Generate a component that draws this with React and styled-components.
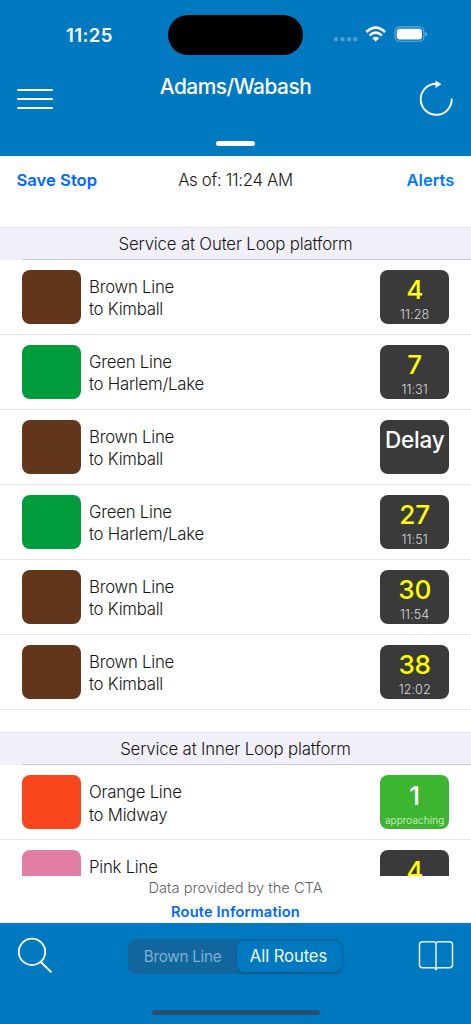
import styled, { createGlobalStyle } from 'styled-components';

const blue = '#0079c1';

const GlobalStyle = createGlobalStyle`
   * {
      box-sizing: border-box;
   }
   body {
      margin: 0;
      background: #fff;
      font-family: Inter, "Liberation Sans", sans-serif;
      font-feature-settings: "calt" 0;
   }
   button {
      border: none;
      background: none;
      padding: 0;
      font-family: inherit;
   }
`;

const Screen = styled.div`
   display: flex;
   flex-direction: column;
   width: 471px;
   height: 1024px;
   overflow: hidden;
   background: #fff;
   color: #161616;
`;

const Header = styled.header`
   flex: none;
   height: 156.4px;
   background: ${blue};
   color: #fff;
`;

const StatusBar = styled.div`
   display: grid;
   grid-template-columns: 168px 135px 1fr;
   height: 55px;
   padding-top: 15px;
`;

const Clock = styled.span`
   padding-left: 66px;
   font-size: 18.6px;
   line-height: 40px;
   font-weight: 600;
   letter-spacing: .35px;
`;

const Island = styled.div`
   height: 39.5px;
   border-radius: 20px;
   background: #000;
`;

const StatusIcons = styled.svg`
   width: 168px;
   height: 40px;
`;

const TitleBar = styled.div`
   display: grid;
   grid-template-columns: 70px 1fr 70px;
   height: 85.5px;
`;

const MenuButton = styled.button`
   display: flex;
   flex-direction: column;
   gap: 7.3px;
   padding: 33.5px 0 0 17px;
`;

const MenuLine = styled.span`
   width: 36px;
   height: 2px;
   border-radius: 1px;
   background: #fff;
`;

const Title = styled.h1`
   margin: 19px 0 0;
   text-align: center;
   font-size: 20.9px;
   line-height: 26px;
   font-weight: 460;
   letter-spacing: -.5px;
`;

const RefreshIcon = styled.svg`
   width: 36px;
   height: 38px;
   margin: 24px 0 0 17px;
`;

const Grabber = styled.div`
   width: 39px;
   height: 5.6px;
   margin: 0 auto;
   border-radius: 3px;
   background: #fff;
`;

const Toolbar = styled.div`
   flex: none;
   display: grid;
   grid-template-columns: 1fr auto 1fr;
   height: 70.6px;
   padding: 13px 16.5px 0;
`;

const AsOf = styled.span`
   font-size: 16.8px;
   line-height: 22px;
   font-weight: 300;
   letter-spacing: -.32px;
`;

const Link = styled.button`
   align-self: start;
   text-align: ${p => (p.$right ? 'right' : 'left')};
   color: ${p => (p.$right ? '#007aff' : '#0066ff')};
   font-size: 16.6px;
   line-height: 22px;
   font-weight: 600;
   letter-spacing: .02px;
`;

const List = styled.main`
   flex: none;
   height: 649px;
   overflow: hidden;
`;

const Section = styled.section`
   margin-bottom: 22.8px;
`;

const SectionTitle = styled.h2`
   height: 32.6px;
   margin: 0;
   background: linear-gradient(#cbcacf, #cbcacf) 22px 100% / 100% 1px no-repeat #f1f0f9;
   border-top: 1px solid #e3e3e6;
   text-align: center;
   font-size: 16.8px;
   line-height: 32px;
   font-weight: 300;
   letter-spacing: -.16px;
`;

const Row = styled.div`
   display: grid;
   grid-template-columns: 59px 1fr 69.5px;
   column-gap: 8.2px;
   height: 75px;
   padding: 10.4px 21.6px 0 21.8px;
   border-bottom: 1px solid #e5e5e6;
`;

const Swatch = styled.div`
   height: 54px;
   border-radius: 8px;
   background: ${p => p.$color};
`;

const RouteName = styled.div`
   padding-top: 6px;
   font-size: 16.8px;
   line-height: 22.5px;
   font-weight: 300;
   letter-spacing: -.25px;
   white-space: pre-line;
`;

const Arrival = styled.div`
   display: flex;
   flex-direction: column;
   align-items: center;
   height: 54px;
   border-radius: 8px;
   background: ${p => (p.$near ? '#3cb531' : '#3a3a3a')};
   color: #fff;
`;

const Minutes = styled.span`
   margin-top: 5.3px;
   color: ${p => (p.$white ? '#fff' : '#ff0')};
   font-size: ${p => (p.$word ? '22.5px' : '26.2px')};
   line-height: 30px;
   font-weight: 450;
   letter-spacing: ${p => (p.$word ? '-.2px' : '-.2px')};
`;

const Detail = styled.span`
   color: ${p => (p.$small ? '#e1f4df' : '#dcdcdc')};
   font-size: ${p => (p.$small ? '10px' : '12.6px')};
   line-height: ${p => (p.$small ? '18px' : '19.4px')};
   font-weight: 300;
   letter-spacing: ${p => (p.$small ? '.1px' : '.05px')};
`;

const Credits = styled.div`
   flex: none;
   display: flex;
   flex-direction: column;
   align-items: center;
   height: 47px;
`;

const Provider = styled.span`
   color: #626262;
   font-size: 14.7px;
   line-height: 25px;
   font-weight: 300;
   letter-spacing: -.03px;
`;

const RouteLink = styled(Link)`
   align-self: center;
   font-size: 14.6px;
   line-height: 23px;
   letter-spacing: .17px;
`;

const BottomBar = styled.footer`
   flex: 1;
   display: grid;
   grid-template-columns: 128px 215px 1fr;
   grid-template-rows: 87px 6px;
   background: ${blue};
`;

const BottomIcon = styled.svg`
   width: 38px;
   height: 38px;
   margin: ${p => p.$margin};
`;

const Segments = styled.div`
   display: grid;
   grid-template-columns: 107px 1fr;
   align-items: center;
   height: 35px;
   margin-top: 16px;
   padding: 1.5px;
   border-radius: 9px;
   background: #10669d;
`;

const Segment = styled.button`
   height: ${p => (p.$active ? '31px' : '32px')};
   padding-right: 1px;
   border-radius: 8px;
   background: ${p => (p.$active ? blue : 'transparent')};
   box-shadow: ${p => (p.$active ? '0 2px 4px rgba(0, 0, 0, .12)' : 'none')};
   color: ${p => (p.$active ? '#f2f9fd' : '#80b2d1')};
   font-size: ${p => (p.$active ? '16.6px' : '15.2px')};
   font-weight: 400;
   letter-spacing: ${p => (p.$active ? '-.08px' : '-.25px')};
`;

const HomeIndicator = styled.div`
   grid-column: 1 / -1;
   justify-self: center;
   width: 168px;
   height: 5.4px;
   border-radius: 3px;
   background: #26506d;
`;

const brown = '#61361a';
const green = '#009b3a';

const outer = [
   { name: 'Brown Line', to: 'Kimball', color: brown, minutes: '4', detail: '11:28' },
   { name: 'Green Line', to: 'Harlem/Lake', color: green, minutes: '7', detail: '11:31' },
   { name: 'Brown Line', to: 'Kimball', color: brown, minutes: 'Delay', delayed: true },
   { name: 'Green Line', to: 'Harlem/Lake', color: green, minutes: '27', detail: '11:51' },
   { name: 'Brown Line', to: 'Kimball', color: brown, minutes: '30', detail: '11:54' },
   { name: 'Brown Line', to: 'Kimball', color: brown, minutes: '38', detail: '12:02' },
];

const inner = [
   { name: 'Orange Line', to: 'Midway', color: '#f9461c', minutes: '1', detail: 'approaching', near: true },
   { name: 'Pink Line', color: '#e27ea6', minutes: '4' },
];

const Train = ({ name, to, color, minutes, detail, delayed, near }) => (
   <Row>
      <Swatch $color={color} />
      <RouteName>{name}{to && `\nto ${to}`}</RouteName>
      <Arrival $near={near}>
         <Minutes $word={delayed} $white={delayed || near}>{minutes}</Minutes>
         {detail && <Detail $small={near}>{detail}</Detail>}
      </Arrival>
   </Row>
)

const Status = () => (
   <StatusIcons viewBox="0 0 168 40">
      <g fill="#fff" opacity=".3">
         <rect x="31" y="22.2" width="4" height="4" rx="1.3" />
         <rect x="37.5" y="22.2" width="4" height="4" rx="1.3" />
         <rect x="44" y="22.2" width="4" height="4" rx="1.3" />
         <rect x="50.3" y="22.2" width="4" height="4" rx="1.3" />
      </g>
      <g fill="none" stroke="#fff" strokeWidth="2.5">
         <path d="M63.3 17Q72.7 8.2 82.1 17" />
         <path d="M66.6 20.5Q72.7 14.7 78.8 20.5" />
      </g>
      <path d="M69.3 23.2Q72.7 20.3 76.1 23.2L72.7 26.6Z" fill="#fff" />
      <rect x="91.9" y="11.9" width="29" height="14.4" rx="4.6" fill="none" stroke="#fff" strokeWidth="1.1" opacity=".4" />
      <rect x="93.7" y="13.8" width="25.3" height="10.6" rx="3" fill="#fff" />
      <path d="M122.4 17Q124.2 17.3 124.2 19.1Q124.2 20.9 122.4 21.2Z" fill="#fff" opacity=".45" />
   </StatusIcons>
)

export default function App() {
   return (
      <Screen>
         <GlobalStyle />
         <Header>
            <StatusBar>
               <Clock>11:25</Clock>
               <Island />
               <Status />
            </StatusBar>
            <TitleBar>
               <MenuButton>
                  <MenuLine />
                  <MenuLine />
                  <MenuLine />
               </MenuButton>
               <Title>Adams/Wabash</Title>
               <RefreshIcon viewBox="418 79 36 38">
                  <path d="M436.2 83.8A15.5 15.5 0 1 0 451.7 98.5" fill="none" stroke="#fff" strokeWidth="1.9" />
                  <path d="M435.5 80.6L441.5 84.2L435.5 88Z" fill="#fff" />
               </RefreshIcon>
            </TitleBar>
            <Grabber />
         </Header>
         <Toolbar>
            <Link>Save Stop</Link>
            <AsOf>As of: 11:24 AM</AsOf>
            <Link $right>Alerts</Link>
         </Toolbar>
         <List>
            <Section>
               <SectionTitle>Service at Outer Loop platform</SectionTitle>
               {outer.map((train, i) => <Train key={i} {...train} />)}
            </Section>
            <Section>
               <SectionTitle>Service at Inner Loop platform</SectionTitle>
               {inner.map((train, i) => <Train key={i} {...train} />)}
            </Section>
         </List>
         <Credits>
            <Provider>Data provided by the CTA</Provider>
            <RouteLink>Route Information</RouteLink>
         </Credits>
         <BottomBar>
            <BottomIcon viewBox="16 936 38 38" $margin="13px 0 0 16px" fill="none" stroke="#fff">
               <circle cx="32" cy="951.9" r="13.2" strokeWidth="1.8" />
               <path d="M40.5 961.7L51.5 972.4" strokeWidth="2" />
            </BottomIcon>
            <Segments>
               <Segment>Brown Line</Segment>
               <Segment $active>All Routes</Segment>
            </Segments>
            <BottomIcon viewBox="417 937 38 38" $margin="14px 0 0 74px" fill="none" stroke="#e8f3fa" strokeWidth="1.5">
               <path d="M436 944Q436 941.8 433.5 941.8H422.4Q419.5 941.8 419.5 944.7V964.8Q419.5 967.7 422.4 967.7H433.8Q436 967.7 436 970.3Q436 967.7 438.2 967.7H449.6Q452.5 967.7 452.5 964.8V944.7Q452.5 941.8 449.6 941.8H438.5Q436 941.8 436 944V970" />
            </BottomIcon>
            <HomeIndicator />
         </BottomBar>
      </Screen>
   )
}
